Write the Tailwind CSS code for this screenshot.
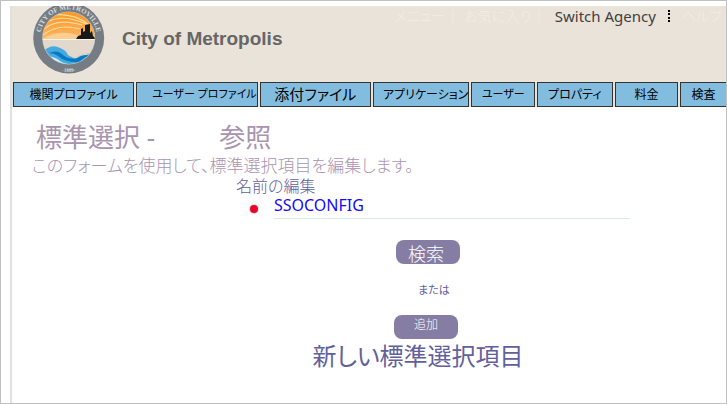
<!DOCTYPE html>
<html lang="ja">
<head>
<meta charset="utf-8">
<title>City of Metropolis</title>
<script src="https://cdn.jsdelivr.net/npm/@tailwindcss/browser@4"></script>
</head>
<body class="flex min-h-screen flex-col border border-[#c0c0c0] bg-white pt-[5px] pl-[9px] font-['Noto_Sans','Noto_Sans_CJK_JP',sans-serif] font-light [font-feature-settings:'palt']">
<div class="flex grow flex-col border-l-2 border-[#e0e0e0]">
  <header class="flex h-[76px] items-start overflow-hidden bg-[#eae3d9] pl-5">
    <svg class="h-[70px] w-[74px] shrink-0" viewBox="32 6 74 70" role="img" aria-label="City of Metroville 1889">
      <defs>
        <path id="arcTop" d="M41 44.500A28.500 28.500 0 1 1 96.400 44.500"/>
        <path id="arcBottom" d="M48 64.500A33 33 0 0 0 89.500 64.500"/>
        <clipPath id="disc"><circle cx="68.700" cy="38" r="26"/></clipPath>
        <linearGradient id="sky" x1="0" y1="0" x2="0" y2="1"><stop offset="0" stop-color="#fb971f"/><stop offset="1" stop-color="#fbb765"/></linearGradient>
      </defs>
      <circle cx="68.700" cy="38" r="35.500" fill="#757c83"/>
      <circle cx="68.700" cy="38" r="26.500" fill="#c3c5c3"/>
      <g clip-path="url(#disc)">
        <rect x="42" y="11" width="54" height="29" fill="url(#sky)"/>
        <g fill="none" stroke="#fcd9a0" stroke-width="1.200">
          <path d="M42 31Q55 17 82 25"/><path d="M45 23Q62 13 86 24"/><path d="M43 35Q58 23 80 29"/><path d="M54 15Q74 13 89 25"/>
        </g>
        <path d="M42 39Q60 28 80 36L96 39Z" fill="#fbcf94"/>
        <rect x="42" y="39" width="54" height="26" fill="#e3d8cc"/>
        <path d="M42 39.500H96" stroke="#fff5e8"/>
        <path d="M42 52Q52 43 60 48Q66 50 68 55Q73 59 79 56Q87 52 96 54V66H42Z" fill="#45aae0"/>
        <path d="M68 55Q73 59 79 56Q87 52 96 54L90 58Q80 57 75 59Z" fill="#e3d8cc"/>
        <path d="M49 53Q58 49 63 55Q69 60 77 58Q83 54 92 55Q84 57 79 62Q66 63 58 56Q54 53 49 53Z" fill="#087ac4"/>
        <path d="M44 57Q53 55 60 61Q66 65 74 64L66 67Q54 65 44 57Z" fill="#d6edf5"/>
        <path d="M76 39L78 36L81 35V29L83 28V32L85 31V25L90 24V33L92 31L93 36L96 39Z" fill="#17191b"/>
      </g>
      <g fill="#dedfdd" font-family="Liberation Serif, serif" font-weight="700">
        <text font-size="7"><textPath href="#arcTop" startOffset="50%" text-anchor="middle">CITY OF METROVILLE</textPath></text>
        <text font-size="5"><textPath href="#arcBottom" startOffset="50%" text-anchor="middle">-1889-</textPath></text>
      </g>
    </svg>
    <h1 class="ml-4 pt-5 font-['Liberation_Sans',sans-serif] text-[19px] leading-[26px] font-bold whitespace-nowrap text-[#666]">City of Metropolis</h1>
    <nav aria-label="ユーティリティ" class="mr-1 ml-auto flex items-center gap-1 text-[14px] leading-[20px] whitespace-nowrap text-[#f3eee3]">
      <a href="#">メニュー</a><span>|</span>
      <a href="#" class="ml-1">お気に入り</a><span>|</span>
      <a href="#" class="mx-2 font-['Noto_Sans',sans-serif] text-[15px] font-normal text-[#404040]">Switch Agency</a>
      <span class="mr-2 h-3 border-l-2 border-dotted border-black"></span>
      <a href="#">ヘルプ</a>
    </nav>
  </header>
  <nav aria-label="メイン" class="flex h-[25px] gap-[2px] overflow-hidden bg-[#eae3d9] pl-px text-[12px] font-normal whitespace-nowrap text-black *:flex *:items-center *:justify-center *:border *:border-[#333] *:bg-[#82bde0]">
    <a href="#" class="min-w-0 flex-[120]">機関プロファイル</a>
    <a href="#" class="min-w-0 flex-[120] justify-end! text-[11px]">ユーザー プロファイル</a>
    <a href="#" class="min-w-0 flex-[110] text-[15px]">添付ファイル</a>
    <a href="#" class="min-w-0 flex-[95] justify-end!">アプリケーション</a>
    <a href="#" class="min-w-0 flex-[62] text-[11px]">ユーザー</a>
    <a href="#" class="min-w-0 flex-[74]">プロパティ</a>
    <a href="#" class="min-w-0 flex-[62]">料金</a>
    <a href="#" class="min-w-0 flex-[45] border-r-0!">検査</a>
  </nav>
  <main class="grow">
    <h2 class="flex gap-16 pt-3 pl-6 text-[26px] leading-[36px] font-normal text-[#a994b0]"><span>標準選択 -</span><span>参照</span></h2>
    <p class="pl-5 text-[17px] leading-[22px] text-[#a994b0]">このフォームを使用して、標準選択項目を編集します。</p>
    <section class="mr-24 ml-[216px]">
      <h3 class="pl-2 text-[16px] leading-[18px] text-[#62609c]">名前の編集</h3>
      <div class="flex items-center">
        <span class="mt-1 mr-4 ml-[22px] size-2 rounded-full bg-[#f00026] ring-1 ring-[#9dc9c0]/50"></span>
        <a href="#" class="grow border-b border-[#d5ebe8] pb-[3px] font-['Noto_Sans',sans-serif] text-[16px] leading-[20px] font-normal text-[#1408ff]">SSOCONFIG</a>
      </div>
    </section>
    <form class="flex flex-col items-center pt-[21px] pl-[98px] text-[#62609c]">
      <button type="button" class="ml-5 h-6 w-16 rounded-lg bg-[#857da4] pt-1 pr-1 text-[18px] leading-[20px] text-white">検索</button>
      <span class="ml-8 pt-[17px] pb-[17px] text-[11px] leading-[17px] font-normal">または</span>
      <button type="button" id="add" class="ml-4 h-6 w-16 rounded-lg bg-[#857da4] pb-1 text-[12px] leading-[20px] text-white">追加</button>
      <label for="add" class="text-[24px] leading-[34px] font-normal">新しい標準選択項目</label>
    </form>
  </main>
</div>
</body>
</html>
